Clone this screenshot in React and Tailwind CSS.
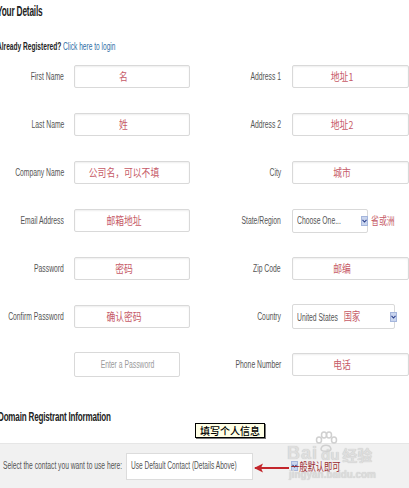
import React from "react";

const SANS = "font-['Liberation_Sans',Arial,sans-serif]";
const CJK = "font-['Noto_Sans_CJK_SC','Liberation_Sans',sans-serif]";

function Label({ children, w = "w-[64px]" }) {
  return (
    <div className={`${w} shrink-0 flex justify-end text-[10px] leading-none text-[#555]`}>
      <span className="shrink-0 inline-block whitespace-nowrap origin-right scale-x-[0.68]">{children}</span>
    </div>
  );
}

function Box({ children, w = "w-[116px]", ml = "ml-[10px]" }) {
  return (
    <div
      className={`${ml} ${w} h-[23px] shrink-0 border border-[#d9d9d9] rounded-[2px] bg-white shadow-[inset_0_1px_2px_rgba(0,0,0,0.07)] flex items-center justify-center pr-[17px]`}
    >
      <span className={`${CJK} inline-block whitespace-nowrap text-[11px] leading-none text-[#c65a67] scale-x-[0.8]`}>
        {children}
      </span>
    </div>
  );
}

function Arrow({ className = "" }) {
  return (
    <span
      className={`${className} w-[7px] h-[10px] shrink-0 bg-[#c9d5ee] border border-[#a5b6dc] flex items-center justify-center`}
    >
      <svg width="5" height="4" viewBox="0 0 5 4">
        <path d="M0.5 0.8 L2.5 3 L4.5 0.8" fill="none" stroke="#2b3f8c" strokeWidth="1.1" />
      </svg>
    </span>
  );
}

export default function App() {
  return (
    <div className={`${SANS} relative w-[409px] h-[488px] overflow-hidden bg-white`}>
      {/* Title */}
      <div className="h-[22px] flex items-center -ml-[3px]">
        <span className="inline-block whitespace-nowrap origin-left scale-x-[0.59] text-[14px] font-bold leading-none tracking-[-0.3px] text-[#222]">
          Your Details
        </span>
      </div>
      <div className="mt-[19px] h-[12px] flex items-center -ml-[3px]">
        <span className="inline-block whitespace-nowrap origin-left scale-x-[0.66] text-[10px] leading-none">
          <span className="font-bold text-[#222]">Already Registered?</span>{" "}
          <span className="text-[#2f6fa6]">Click here to login</span>
        </span>
      </div>

      {/* Form grid */}
      <div className="mt-[12px] grid grid-cols-[205px_204px] gap-y-[25px]">
        {/* row 1 */}
        <div className="h-[23px] flex items-center">
          <Label>First Name</Label>
          <Box>名</Box>
        </div>
        <div className="h-[23px] flex items-center">
          <Label w="w-[76px]">Address 1</Label>
          <Box w="w-[117px]" ml="ml-[11px]">地址1</Box>
        </div>
        {/* row 2 */}
        <div className="h-[23px] flex items-center">
          <Label>Last Name</Label>
          <Box>姓</Box>
        </div>
        <div className="h-[23px] flex items-center">
          <Label w="w-[76px]">Address 2</Label>
          <Box w="w-[117px]" ml="ml-[11px]">地址2</Box>
        </div>
        {/* row 3 */}
        <div className="h-[23px] flex items-center">
          <Label>Company Name</Label>
          <Box>公司名，可以不填</Box>
        </div>
        <div className="h-[23px] flex items-center">
          <Label w="w-[76px]">City</Label>
          <Box w="w-[117px]" ml="ml-[11px]">城市</Box>
        </div>
        {/* row 4 */}
        <div className="h-[23px] flex items-center">
          <Label>Email Address</Label>
          <Box>邮箱地址</Box>
        </div>
        <div className="h-[23px] flex items-center">
          <Label w="w-[76px]">State/Region</Label>
          <div className="ml-[11px] w-[76px] h-[24px] shrink-0 border border-[#d9d9d9] rounded-[2px] bg-white flex items-center pl-[4px] pr-[5px]">
            <span className="flex-1 text-[10px] leading-none text-[#555]">
              <span className="inline-block whitespace-nowrap origin-left scale-x-[0.68]">Choose One...</span>
            </span>
            <Arrow />
          </div>
          <span className={`${CJK} ml-[3px] inline-block whitespace-nowrap origin-left scale-x-[0.72] text-[11px] leading-none text-[#c65a67]`}>
            省或洲
          </span>
        </div>
        {/* row 5 */}
        <div className="h-[23px] flex items-center">
          <Label>Password</Label>
          <Box>密码</Box>
        </div>
        <div className="h-[23px] flex items-center">
          <Label w="w-[76px]">Zip Code</Label>
          <Box w="w-[117px]" ml="ml-[11px]">邮编</Box>
        </div>
        {/* row 6 */}
        <div className="h-[23px] flex items-center">
          <Label>Confirm Password</Label>
          <Box>确认密码</Box>
        </div>
        <div className="h-[23px] flex items-center">
          <Label w="w-[76px]">Country</Label>
          <div className="ml-[11px] w-[103px] h-[25px] shrink-0 border border-[#d9d9d9] rounded-[2px] bg-white flex items-center pl-[4px] pr-[3px]">
            <span className="flex-1 flex items-center text-[10px] leading-none text-[#555]">
              <span className="inline-block whitespace-nowrap origin-left scale-x-[0.68]">
                United States{"  "}
                <span className={`${CJK} ml-[6px] text-[12px] text-[#c65a67]`}>国家</span>
              </span>
            </span>
            <Arrow />
          </div>
        </div>
        {/* row 7 */}
        <div className="h-[23px] flex items-center">
          <div className="w-[64px] shrink-0" />
          <div className="ml-[10px] w-[106px] h-[25px] shrink-0 border border-[#d9d9d9] rounded-[2px] bg-white flex items-center justify-center">
            <span className="inline-block whitespace-nowrap scale-x-[0.68] text-[10px] leading-none text-[#9a9a9a]">
              Enter a Password
            </span>
          </div>
        </div>
        <div className="h-[23px] flex items-center">
          <Label w="w-[76px]">Phone Number</Label>
          <Box w="w-[117px]" ml="ml-[11px]">电话</Box>
        </div>
      </div>

      {/* Domain heading */}
      <div className="mt-[33px] h-[14px] flex items-center -ml-[2px]">
        <span className="inline-block whitespace-nowrap origin-left scale-x-[0.62] text-[13px] font-bold leading-none tracking-[-0.3px] text-[#222]">
          Domain Registrant Information
        </span>
      </div>

      {/* Bottom band */}
      <div className="mt-[20px] h-[45px] bg-[#f1f1f1] border-t border-[#e6e6e6] flex items-center pl-[3px]">
        <div className="w-[123px] shrink-0 text-[10px] leading-none text-[#555]">
          <span className="inline-block whitespace-nowrap origin-left scale-x-[0.67]">
            Select the contact you want to use here:
          </span>
        </div>
        <div className="w-[127px] h-[27px] shrink-0 border border-[#dcdcdc] bg-white flex items-center pl-[4px] pr-[3px]">
          <span className="flex-1 text-[10px] leading-none text-[#555]">
            <span className="inline-block whitespace-nowrap origin-left scale-x-[0.66]">
              Use Default Contact (Details Above)
            </span>
          </span>
          <Arrow />
        </div>
      </div>

      {/* Watermark */}
      <div className="absolute left-[287px] top-[444px] flex items-end text-[#dedede] font-bold leading-none [text-shadow:0_0_1px_#bbb]">
        <span className="text-[18px] tracking-[1px]">Bai</span>
        <span className="text-[15px] ml-[3px]">du</span>
        <span className={`${CJK} text-[15px] ml-[3px]`}>经验</span>
      </div>
      <svg className="absolute left-[314px] top-[431px]" width="24" height="22" viewBox="0 0 24 22">
        <g fill="none" stroke="#d0d0d0" strokeWidth="1.5">
          <ellipse cx="5" cy="9" rx="2.5" ry="3" />
          <ellipse cx="10" cy="4" rx="2.5" ry="3" />
          <ellipse cx="15" cy="4" rx="2.5" ry="3" />
          <ellipse cx="20" cy="9" rx="2.5" ry="3" />
          <path d="M7 18 C8 13 16 13 17 18 C17 21 7 21 7 18 Z" />
        </g>
      </svg>
      <div className="absolute left-[289px] top-[469px] text-[11px] leading-none text-[#dcdcdc] font-bold [text-shadow:0_0_1px_#c4c4c4]">
        <span className="inline-block whitespace-nowrap origin-left scale-x-[0.9]">jingyan.baidu.com</span>
      </div>

      {/* Tooltip */}
      <div className="absolute left-[195px] top-[423px] w-[70px] h-[15px] border border-black bg-[#ffffe6] shadow-[1px_1px_0_#777] flex items-center justify-center">
        <span className={`${CJK} text-[10px] leading-none text-black font-medium`}>填写个人信息</span>
      </div>

      {/* Red arrow */}
      <svg className="absolute left-[253px] top-[462px]" width="38" height="12" viewBox="0 0 38 12">
        <path d="M2 6 L36 6" stroke="#c3262c" strokeWidth="2" />
        <path d="M1 6 L10 1.5 L8 6 L10 10.5 Z" fill="#c3262c" />
      </svg>
      <div className={`${CJK} absolute left-[291px] top-[461px] text-[11px] leading-none text-[#9b2a2f]`}>
        <span className="inline-block whitespace-nowrap origin-left scale-x-[0.75]">一般默认即可</span>
      </div>
    </div>
  );
}
